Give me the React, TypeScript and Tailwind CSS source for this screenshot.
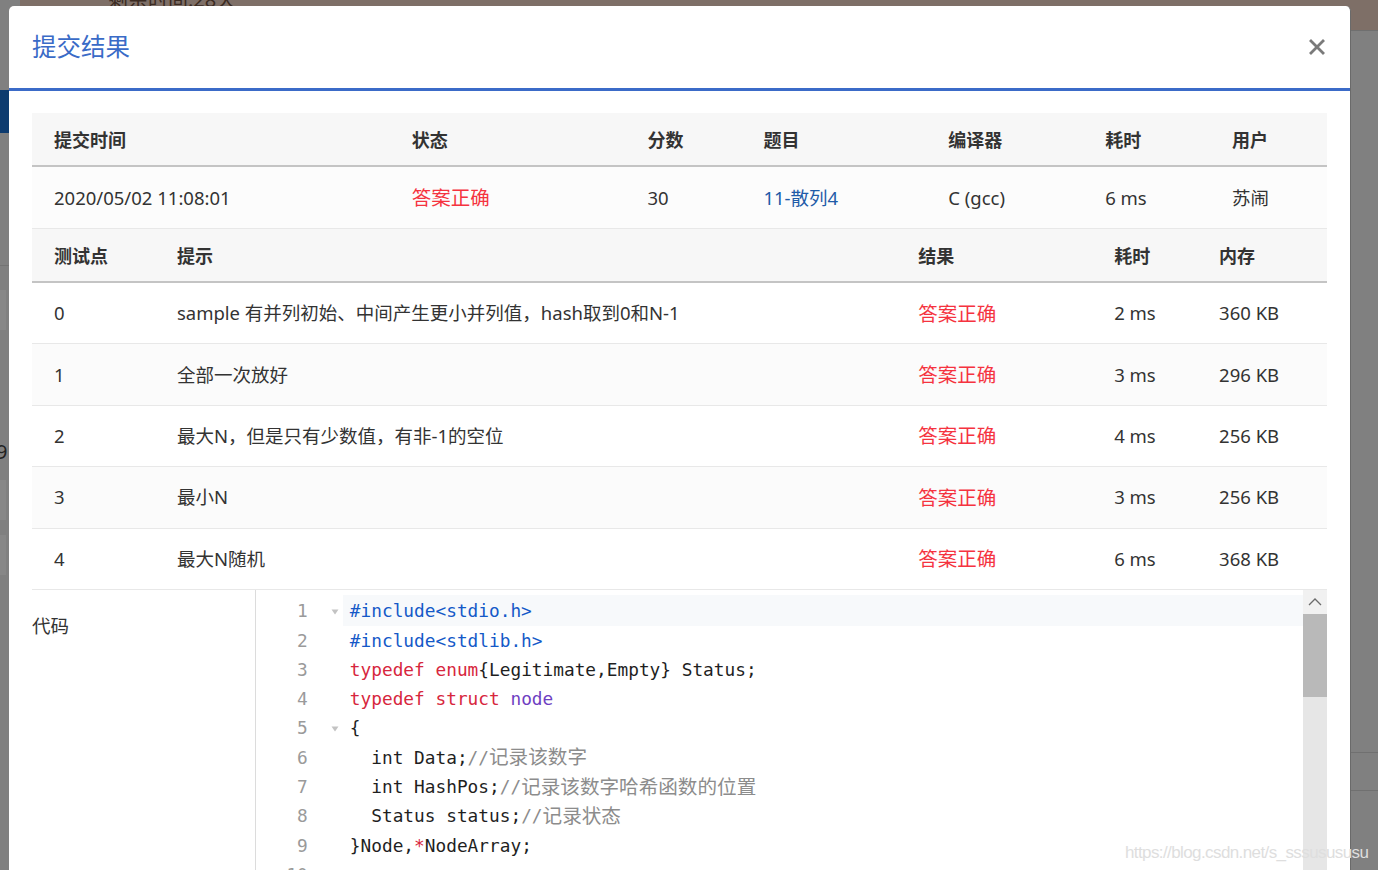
import React from "react";

const ui = { fontFamily: '"Noto Sans", "Noto Sans CJK SC", sans-serif' };
const mono = { fontFamily: '"DejaVu Sans Mono", "Noto Sans CJK SC", monospace' };

const RED = "text-[#f5333f] text-[19.5px]";

const testRows = [
  { id: "0", hint: "sample 有并列初始、中间产生更小并列值，hash取到0和N-1", time: "2 ms", mem: "360 KB" },
  { id: "1", hint: "全部一次放好", time: "3 ms", mem: "296 KB" },
  { id: "2", hint: "最大N，但是只有少数值，有非-1的空位", time: "4 ms", mem: "256 KB" },
  { id: "3", hint: "最小N", time: "3 ms", mem: "256 KB" },
  { id: "4", hint: "最大N随机", time: "6 ms", mem: "368 KB" },
];

type Tok = [string, string];
const K = "text-[#d7263d]";
const P = "text-[#1459c8]";
const V = "text-[#6f3fc2]";
const C = "text-[#8c8c8c]";
const CJ = "text-[#8c8c8c] text-[19.6px]";
const N = "text-[#1f1f1f]";

const code: { fold?: boolean; toks: Tok[] }[] = [
  { fold: true, toks: [["#include<stdio.h>", P]] },
  { toks: [["#include<stdlib.h>", P]] },
  { toks: [["typedef", K], [" ", N], ["enum", K], ["{Legitimate,Empty} Status;", N]] },
  { toks: [["typedef", K], [" ", N], ["struct", K], [" ", N], ["node", V]] },
  { fold: true, toks: [["{", N]] },
  { toks: [["  int Data;", N], ["//", C], ["记录该数字", CJ]] },
  { toks: [["  int HashPos;", N], ["//", C], ["记录该数字哈希函数的位置", CJ]] },
  { toks: [["  Status status;", N], ["//", C], ["记录状态", CJ]] },
  { toks: [["}Node,", N], ["*", K], ["NodeArray;", N]] },
  { toks: [["", N]] },
  { toks: [["", N]] },
];

function Th({ w, children }: { w: string; children?: React.ReactNode }) {
  return <div className={`${w} pl-[22px] mt-[3px] font-bold text-[18px] text-[#333]`}>{children}</div>;
}

function Td({ w, cls = "text-[#333] text-[18.5px]", children }: { w: string; cls?: string; children?: React.ReactNode }) {
  return <div className={`${w} pl-[22px] ${cls}`}>{children}</div>;
}

export default function App() {
  return (
    <div className="relative w-[1378px] h-[870px] overflow-hidden bg-[#808080]" style={ui}>
      {/* page behind the overlay */}
      <div className="absolute left-[20px] top-0 w-[1358px] h-[31px] bg-[#7e6f67] border-b border-[#6f6f6f] overflow-hidden">
        <div className="absolute left-[88px] top-[-15px] text-[20px] text-[#3b2b22]">剩余时间:28天</div>
      </div>
      <div className="absolute left-0 top-[90px] w-[12px] h-[43px] bg-[#0d3b6f]" />
      <div className="absolute left-0 top-[265px] w-[12px] h-px bg-[#737373]" />
      <div className="absolute left-0 top-[290px] w-[6px] h-[40px] bg-[#878787]" />
      <div className="absolute left-0 top-[480px] w-[6px] h-[40px] bg-[#878787]" />
      <div className="absolute left-0 top-[535px] w-[6px] h-[40px] bg-[#878787]" />
      <div className="absolute left-[-4px] top-[437px] text-[20px] text-[#222]">9</div>
      <div className="absolute left-[1340px] top-[752px] w-[38px] h-px bg-[#707070]" />
      <div className="absolute left-[1340px] top-[790px] w-[38px] h-px bg-[#707070]" />

      {/* modal */}
      <div className="relative ml-[9px] mt-[6px] w-[1342px] h-[900px] bg-white rounded-t-[5px] border-r border-[#6a6a6a]">
        <div className="h-[82px] flex items-center justify-between pl-[23px] pr-[25px]">
          <div className="text-[24.5px] text-[#3a6bc7] mt-[1px]">提交结果</div>
          <svg width="16" height="16" viewBox="0 0 16 16">
            <path d="M2 2 L14 14 M14 2 L2 14" stroke="#7a7a7a" strokeWidth="2.8" strokeLinecap="square" />
          </svg>
        </div>
        <div className="h-[3px] bg-[#3b6bc8]" />

        <div className="pt-[22px] px-[23px]">
          {/* submission summary */}
          <div className="flex items-center h-[54px] bg-[#f7f7f7] border-b-2 border-[#c4c4c4]">
            <Th w="w-[358px]">提交时间</Th>
            <Th w="w-[236px]">状态</Th>
            <Th w="w-[116px]">分数</Th>
            <Th w="w-[185px]">题目</Th>
            <Th w="w-[157px]">编译器</Th>
            <Th w="w-[127px]">耗时</Th>
            <Th w="w-[117px]">用户</Th>
          </div>
          <div className="flex items-center h-[62px] bg-[#fcfcfc] border-b border-[#e8e8e8]">
            <Td w="w-[358px]">2020/05/02 11:08:01</Td>
            <Td w="w-[236px]" cls={RED}>答案正确</Td>
            <Td w="w-[116px]">30</Td>
            <Td w="w-[185px]" cls="text-[#1f5ba8] text-[18.5px]">11-散列4</Td>
            <Td w="w-[157px]">C (gcc)</Td>
            <Td w="w-[127px]">6 ms</Td>
            <Td w="w-[117px]">苏闹</Td>
          </div>

          {/* test points */}
          <div className="flex items-center h-[54px] bg-[#f7f7f7] border-b-2 border-[#c4c4c4]">
            <Th w="w-[123px]">测试点</Th>
            <Th w="w-[742px]">提示</Th>
            <Th w="w-[196px]">结果</Th>
            <Th w="w-[105px]">耗时</Th>
            <Th w="w-[130px]">内存</Th>
          </div>
          {testRows.map((r, i) => (
            <div
              key={r.id}
              className={`flex items-center h-[61.4px] border-b border-[#e8e8e8] ${i % 2 === 1 ? "bg-[#fbfbfb]" : "bg-white"}`}
            >
              <Td w="w-[123px]">{r.id}</Td>
              <Td w="w-[742px]">{r.hint}</Td>
              <Td w="w-[196px]" cls={RED}>答案正确</Td>
              <Td w="w-[105px]">{r.time}</Td>
              <Td w="w-[130px]">{r.mem}</Td>
            </div>
          ))}

          {/* code */}
          <div className="flex">
            <div className="w-[223px] pt-[22px] text-[18.5px] text-[#333]">代码</div>
            <div className="flex w-[1073px] h-[300px] border-l border-[#dcdcdc]">
              <div className="w-[87px] pt-[7px]" style={mono}>
                {code.map((l, i) => (
                  <div key={i} className="flex items-center h-[29.3px]">
                    <div className="w-[52px] text-right text-[17.8px] text-[#9a9a9a]">{i + 1}</div>
                    <div className="w-[35px] flex justify-end pr-[4px]">
                      {l.fold && (
                        <svg width="8" height="6" viewBox="0 0 8 6">
                          <path d="M0.5 0.5 L7.5 0.5 L4 5.5 Z" fill="#c3c3c3" />
                        </svg>
                      )}
                    </div>
                  </div>
                ))}
              </div>
              <div className="flex-1 pt-[5px]" style={mono}>
                {code.map((l, i) => (
                  <div
                    key={i}
                    className={`flex items-center pl-[7px] text-[17.8px] whitespace-pre ${i === 0 ? "h-[31.3px] pt-[2px] bg-[#f7f9fb]" : "h-[29.3px]"}`}
                  >
                    {l.toks.map(([t, c], j) => (
                      <span key={j} className={c}>{t}</span>
                    ))}
                  </div>
                ))}
              </div>
              <div className="w-[24px] flex flex-col bg-[#e6e6e6]">
                <div className="h-[24px] bg-[#f1f1f1] flex items-center justify-center">
                  <svg width="14" height="8" viewBox="0 0 14 8">
                    <path d="M1 7 L7 1 L13 7" fill="none" stroke="#6b6b6b" strokeWidth="1.3" />
                  </svg>
                </div>
                <div className="h-[83px] bg-[#b9b9b9]" />
              </div>
            </div>
          </div>
        </div>
      </div>

      {/* watermark */}
      <div
        className="absolute left-[1125px] top-[840px] text-[17px] tracking-[-0.6px] text-[#dedede] whitespace-nowrap"
        style={{ fontFamily: '"Liberation Sans", sans-serif' }}
      >
        https://blog.csdn.net/s_sssusususu
      </div>
    </div>
  );
}
